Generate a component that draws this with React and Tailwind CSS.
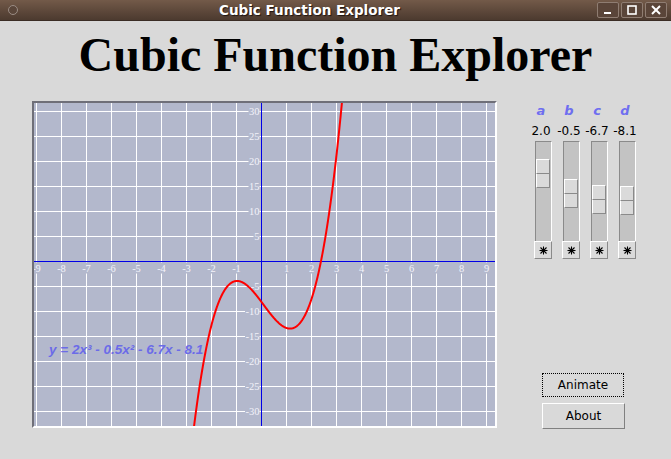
import React from 'react';

const W = 461;
const H = 323;
const OX = 227.5;
const OY = 158.5;

const cubic = (x) => 2 * x ** 3 - 0.5 * x ** 2 - 6.7 * x - 8.1;

const curvePath = () => {
  const pts = [];
  for (let x = -9.2; x <= 9.5; x += 0.01) {
    const py = OY - 5 * cubic(x);
    if (py < -40 || py > H + 40) continue;
    pts.push(`${(OX + 25 * x).toFixed(2)},${py.toFixed(2)}`);
  }
  return 'M' + pts.join(' L');
};

const xTicks = [-9, -8, -7, -6, -5, -4, -3, -2, -1, 1, 2, 3, 4, 5, 6, 7, 8, 9];
const yTicks = [-30, -25, -20, -15, -10, -5, 5, 10, 15, 20, 25, 30];

const Graph = () => (
  <div className="w-[465px] h-[327px] border-2 border-t-[#6f6f78] border-l-[#6f6f78] border-b-white border-r-white">
    <svg width={W} height={H} className="block" style={{ fontFamily: '"Liberation Serif", serif' }}>
      <rect x="0" y="0" width={W} height={H} fill="#b3b8cc" />
      <g shapeRendering="crispEdges">
        {xTicks.map((k) => (
          <line key={'v' + k} x1={OX + 25 * k} y1="0" x2={OX + 25 * k} y2={H} stroke="#ffffff" strokeWidth="1.5" />
        ))}
        {[-6, -5, -4, -3, -2, -1, 1, 2, 3, 4, 5, 6].map((k) => (
          <line key={'h' + k} x1="0" y1={OY - 25 * k} x2={W} y2={OY - 25 * k} stroke="#ffffff" strokeWidth="1.5" />
        ))}
        <line x1={OX} y1="0" x2={OX} y2={H} stroke="#0000e6" strokeWidth="1.2" />
        <line x1="0" y1={OY} x2={W} y2={OY} stroke="#0000e6" strokeWidth="1.2" />
      </g>
      {yTicks.map((v) => {
        const t = String(v);
        const w = t.replace('-', '').length * 5 + (v < 0 ? 3.5 : 0) + 1;
        const y = OY - 5 * v;
        return (
          <g key={'yl' + v}>
            <rect x={OX - 2 - w} y={y - 5} width={w} height="10" fill="#b3b8cc" />
            <text x={OX - 2} y={y + 3.5} textAnchor="end" fontSize="10.5" fill="#f2f2fa">{t}</text>
          </g>
        );
      })}
      {xTicks.map((v) => {
        const t = String(v);
        const w = t.replace('-', '').length * 5 + (v < 0 ? 3.5 : 0) + 2;
        const x = OX + 25 * v;
        return (
          <g key={'xl' + v}>
            <rect x={x - w / 2} y={OY + 1} width={w} height="11" fill="#b3b8cc" />
            <text x={x} y={OY + 10} textAnchor="middle" fontSize="10.5" fill="#f2f2fa">{t}</text>
          </g>
        );
      })}
      <path d={curvePath()} fill="none" stroke="#ff0000" strokeWidth="2" />
      <text
        x="15"
        y="250.5"
        fontSize="13.5"
        fontWeight="bold"
        fontStyle="italic"
        fill="#6b6be8"
        style={{ fontFamily: '"Liberation Sans", sans-serif' }}
      >
        y = 2x³ - 0.5x² - 6.7x - 8.1
      </text>
    </svg>
  </div>
);

const Star = () => (
  <svg width="9" height="9" viewBox="0 0 9 9" className="block">
    <g stroke="#000" strokeWidth="1.1">
      <line x1="4.5" y1="0.5" x2="4.5" y2="8.5" />
      <line x1="0.5" y1="4.5" x2="8.5" y2="4.5" />
      <line x1="1.5" y1="1.5" x2="7.5" y2="7.5" />
      <line x1="7.5" y1="1.5" x2="1.5" y2="7.5" />
    </g>
  </svg>
);

const sliders = [
  { name: 'a', value: '2.0', offset: 'mt-[17px]' },
  { name: 'b', value: '-0.5', offset: 'mt-[37px]' },
  { name: 'c', value: '-6.7', offset: 'mt-[43px]' },
  { name: 'd', value: '-8.1', offset: 'mt-[44px]' },
];

const Slider = ({ name, value, offset }) => (
  <div className="w-[28px] flex flex-col items-center">
    <div
      className="h-[14px] leading-[14px] text-[13px] font-bold italic text-[#6e6ef0]"
      style={{ fontFamily: '"DejaVu Sans", sans-serif' }}
    >
      {name}
    </div>
    <div className="mt-[6px] h-[14px] leading-[14px] text-[12px] text-black whitespace-nowrap">{value}</div>
    <div className="mt-[3px] ml-[4px] w-[17px] h-[100px] bg-[#c3c3c3] border-l border-t border-l-[#8a8a8a] border-t-[#8a8a8a] border-r border-r-white">
      <div className={`${offset} w-[14px] flex flex-col`}>
        <div className="h-[15px] bg-[#dadada] border-t border-l border-b border-r border-t-white border-l-white border-b-[#8a8a8a] border-r-[#8a8a8a]" />
        <div className="h-[14px] bg-[#dadada] border-l border-b border-r border-l-white border-b-[#8a8a8a] border-r-[#8a8a8a]" />
      </div>
    </div>
    <div className="ml-[4px] w-[18px] h-[18px] bg-[#dadada] border border-t-white border-l-white border-b-[#8a8a8a] border-r-[#8a8a8a] flex items-center justify-center">
      <Star />
    </div>
  </div>
);

const TitleBar = () => (
  <div className="h-[21px] flex items-center bg-gradient-to-b from-[#735a49] to-[#4c3a2f] border-b border-[#3a2c24]">
    <div className="w-[22px] flex justify-center">
      <div className="w-[10px] h-[10px] ml-[4px] rounded-full border border-[#9a8c84] bg-[#5a463a]" />
    </div>
    <div
      className="flex-1 text-center text-white text-[13.5px] font-bold leading-[21px] [text-shadow:1px_1px_1px_#1e1410]"
      style={{ fontFamily: '"DejaVu Sans", sans-serif' }}
    >
      Cubic Function Explorer
    </div>
    <div className="flex gap-[2px] pr-[4px]">
      {['min', 'max', 'close'].map((k) => (
        <div key={k} className="w-[22px] h-[16px] rounded-[2px] border border-[#8f7d72] bg-[#5a4539] flex items-center justify-center">
          <svg width="12" height="10" viewBox="0 0 12 10" className="block">
            {k === 'min' && <rect x="2" y="7" width="7" height="2" fill="#fff" />}
            {k === 'max' && <rect x="2" y="1" width="8" height="8" fill="none" stroke="#fff" strokeWidth="1.6" />}
            {k === 'close' && (
              <g stroke="#fff" strokeWidth="2">
                <line x1="2" y1="1" x2="10" y2="9" />
                <line x1="10" y1="1" x2="2" y2="9" />
              </g>
            )}
          </svg>
        </div>
      ))}
    </div>
  </div>
);

export default function App() {
  return (
    <div
      className="w-[671px] h-[459px] bg-[#d9d9d9] overflow-hidden"
      style={{ fontFamily: '"DejaVu Sans", sans-serif' }}
    >
      <TitleBar />
      <h1
        className="mt-[10px] h-[48px] leading-[48px] text-center text-[48px] font-bold text-black"
        style={{ fontFamily: '"Liberation Serif", serif' }}
      >
        Cubic Function Explorer
      </h1>
      <div className="mt-[22px] flex pl-[32px]">
        <Graph />
        <div className="ml-[30px] pt-[3px] flex flex-col">
          <div className="flex">
            {sliders.map((s) => (
              <Slider key={s.name} {...s} />
            ))}
          </div>
          <div className="mt-[114px] ml-[15px] flex flex-col gap-[6px]">
            <button className="w-[82px] h-[24px] bg-[#d9d9d9] border border-dotted border-black text-[12px] text-black leading-[20px]">
              Animate
            </button>
            <button className="w-[83px] h-[26px] bg-[#d9d9d9] border border-t-white border-l-white border-b-[#808080] border-r-[#808080] text-[12px] text-black leading-[22px]">
              About
            </button>
          </div>
        </div>
      </div>
    </div>
  );
}
